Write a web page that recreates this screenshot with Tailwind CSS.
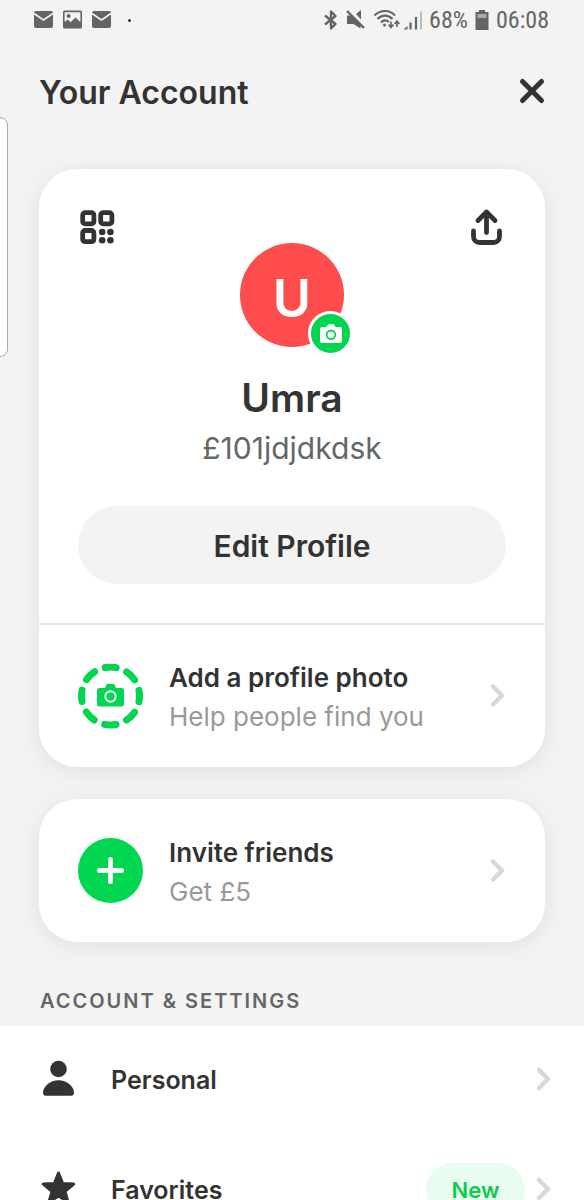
<!DOCTYPE html>
<html lang="en">
<head>
<meta charset="utf-8">
<meta name="viewport" content="width=device-width, initial-scale=1">
<title>Your Account</title>
<script src="https://cdn.jsdelivr.net/npm/@tailwindcss/browser@4"></script>
</head>
<body class="relative flex h-screen flex-col overflow-y-auto bg-[#f3f3f3] font-['Inter',sans-serif] text-[#333] [scrollbar-width:none]">

  <!-- System status bar -->
  <div class="flex h-10 shrink-0 items-center justify-between pl-8 pr-[35px] text-[#646464]">
    <div class="flex items-center gap-[7px]">
      <svg class="h-[22px] w-[22px]" viewBox="0 0 22 22" fill="currentColor"><rect x="2" y="2" width="19" height="17" rx="2"/><path d="M2 4.500 11.500 11 21 4.500" fill="none" stroke="#f3f3f3" stroke-width="1.600"/></svg>
      <svg class="h-[22px] w-[22px]" viewBox="0 0 22 22"><path fill="currentColor" fill-rule="evenodd" d="M3.500 1.500h16a1.500 1.500 0 0 1 1.500 1.500v15a1.500 1.500 0 0 1-1.500 1.500h-16A1.500 1.500 0 0 1 2 18V3a1.500 1.500 0 0 1 1.500-1.500ZM3.600 3.200v9.900l3.200-2.600 2.800 2.700 4.800-4.600 5 4.500V3.200Z"/><circle cx="7.600" cy="7" r="2" fill="currentColor"/></svg>
      <svg class="h-[22px] w-[22px]" viewBox="0 0 22 22" fill="currentColor"><rect x="2" y="2" width="19" height="17" rx="2"/><path d="M2 4.500 11.500 11 21 4.500" fill="none" stroke="#f3f3f3" stroke-width="1.600"/></svg>
      <span class="ml-[9px] size-[3px] rounded-full bg-[#333]"></span>
    </div>
    <div class="flex items-center gap-[7px] font-['Roboto_Condensed','Liberation_Sans_Narrow',Roboto,sans-serif] text-[24px]">
      <svg class="h-[22px] w-4" viewBox="0 0 16 22" fill="none" stroke="currentColor" stroke-width="2.400" stroke-linejoin="round"><path d="m3 6.500 10.500 8.500L9 19.500v-17L13.500 7 3 15.500"/></svg>
      <svg class="h-[22px] w-5" viewBox="0 0 20 22" fill="currentColor"><path d="M2 6.500h4.500l9 9v4L8.500 15H2ZM11 5l5-4v9.500Z"/><path d="m2 2 17 17" stroke="currentColor" stroke-width="2.400"/></svg>
      <svg class="h-[22px] w-[50px]" viewBox="0 0 50 22" fill="none" stroke="currentColor" stroke-width="2.200"><path d="M2.500 6.500c6-6 15-6 20.500 0M5.500 10c4.500-4.500 10.500-4.500 15 0M9 13.500c2.500-2.500 5.500-2.500 8-.5"/><circle cx="12.500" cy="16" r="1.500" fill="currentColor" stroke="none"/><path d="M19 12.500v6M16.600 15.500l2.400 3 2.400-3M25 18v-6M22.600 15l2.400-3 2.400 3" stroke-width="1.600"/><path d="M31.500 20.500 35.500 17v3.500Z" fill="currentColor" stroke="none"/><path d="M38.500 13.500v7M44 8v12.500"/><path d="M49 2.500v18" stroke="#bdbdbd" stroke-width="2"/></svg>
      <span>68%</span>
      <svg class="h-[22px] w-[14px]" viewBox="0 0 14 22"><path fill="currentColor" d="M4 1h6v2h3.500v18H.5V3H4Z"/><path fill="#aaa" d="M2.500 5h9v4h-9z"/></svg>
      <span>06:08</span>
    </div>
  </div>

  <!-- Edge panel handle -->
  <div class="absolute -left-2 top-[117px] h-60 w-4 rounded-lg border border-[#aaa] bg-white"></div>

  <header class="flex h-[105px] shrink-0 items-center justify-between px-[39px]">
    <h1 class="pt-px text-[32px] font-semibold">Your Account</h1>
    <button type="button" aria-label="Close" class="-mr-px pb-1">
      <svg class="block size-7" viewBox="0 0 28 28" fill="none" stroke="#333" stroke-width="5" stroke-linecap="round"><path d="m4.500 4.500 19 19M23.500 4.500l-19 19"/></svg>
    </button>
  </header>

  <main class="flex shrink-0 flex-col pt-6">
    <section class="mx-[39px] rounded-[38px] bg-white shadow-[0_4px_24px_rgba(0,0,0,0.08)]">
      <div class="flex flex-col items-center px-[39px] pb-[39px] pt-[38px]">
        <div class="flex w-full items-start justify-between">
          <button type="button" aria-label="Show QR code">
            <svg class="size-10" viewBox="0 0 40 40" fill="none" stroke="#333" stroke-width="4.800"><rect x="4.700" y="5.700" width="11.200" height="11.200" rx="2.500"/><rect x="22.700" y="5.700" width="11.200" height="11.200" rx="2.500"/><rect x="4.700" y="23.500" width="11.200" height="11.200" rx="2.500"/><g fill="#333" stroke="none"><circle cx="24.200" cy="25" r="3.300"/><circle cx="32.400" cy="25" r="3.300"/><circle cx="24.200" cy="33.200" r="3.300"/><circle cx="32.400" cy="33.200" r="3.300"/></g></svg>
          </button>
          <div class="relative mt-9 flex size-[104px] items-center justify-center rounded-full bg-[#ff4c4c] pt-2 text-[52px] font-semibold text-white">
            U
            <span class="absolute -bottom-[9px] -right-[9px] flex size-[45px] items-center justify-center rounded-full border-3 border-white bg-[#00d64f]">
              <svg class="h-6 w-6" viewBox="0 0 24 24"><path fill="#fff" d="M3 5h4.500L9 2.300h6L16.500 5H21a2 2 0 0 1 2 2v12a2 2 0 0 1-2 2H3a2 2 0 0 1-2-2V7a2 2 0 0 1 2-2Z"/><circle cx="12" cy="12.800" r="4.300" fill="none" stroke="#00d64f" stroke-width="1.800"/></svg>
            </span>
          </div>
          <button type="button" aria-label="Share profile">
            <svg class="size-10" viewBox="0 0 40 40" fill="none" stroke="#333" stroke-width="4.800" stroke-linecap="round" stroke-linejoin="round"><path d="M20.500 25.500V5M12 13.500 20.500 5l8.500 8.500M7.500 24v5.500a6 6 0 0 0 6 6h14a6 6 0 0 0 6-6V24"/></svg>
          </button>
        </div>
        <h2 class="mt-[27px] text-[39px]/[48px] font-semibold">Umra</h2>
        <p class="mt-2 text-[30px]/[36px] text-[#666]">£101jdjdkdsk</p>
        <button type="button" class="mt-10 h-[78px] w-full rounded-full bg-[#f3f3f3] pt-0.5 text-[30px] font-semibold">Edit Profile</button>
      </div>
      <a href="#photo" class="flex h-[144px] items-center border-t-2 border-[#e5e5e5] px-[39px]">
        <svg class="size-[65px]" viewBox="0 0 65 65"><circle cx="32.500" cy="32" r="29" fill="none" stroke="#00d64f" stroke-width="7" stroke-linecap="round" stroke-dasharray="11.400 11.376" stroke-dashoffset="5.700" transform="rotate(-90 32.500 32)"/><path fill="#00d64f" d="M21.500 24h5.500l1.700-4h7.600l1.700 4h5.500A2.500 2.500 0 0 1 46 26.500V40a2.500 2.500 0 0 1-2.500 2.500h-22A2.500 2.500 0 0 1 19 40V26.500a2.500 2.500 0 0 1 2.500-2.500Z"/><circle cx="32.500" cy="32.500" r="5.200" fill="none" stroke="#fff" stroke-width="2"/></svg>
        <span class="ml-[26px] flex-1 pt-0.5">
          <span class="block text-[26px]/[39px] font-semibold">Add a profile photo</span>
          <span class="block text-[26px]/[39px] text-[#999]">Help people find you</span>
        </span>
        <svg class="h-7 w-5" viewBox="0 0 20 28" fill="none" stroke="#d8d8d8" stroke-width="4.500" stroke-linecap="round" stroke-linejoin="round"><path d="m7 4.500 9 9-9 9"/></svg>
      </a>
    </section>

    <a href="#invite" class="mx-[39px] mt-8 flex h-[143px] items-center rounded-[38px] bg-white px-[39px] shadow-[0_4px_24px_rgba(0,0,0,0.08)]">
      <svg class="size-[65px]" viewBox="0 0 65 65"><circle cx="32.500" cy="32.500" r="32.500" fill="#00d64f"/><path d="M21.500 32.500h22M32.500 21.500v22" stroke="#fff" stroke-width="5" stroke-linecap="round"/></svg>
      <span class="ml-[26px] flex-1 pt-0.5">
        <span class="block text-[26px]/[39px] font-semibold">Invite friends</span>
        <span class="block text-[26px]/[39px] text-[#999]">Get £5</span>
      </span>
      <svg class="h-7 w-5" viewBox="0 0 20 28" fill="none" stroke="#d8d8d8" stroke-width="4.500" stroke-linecap="round" stroke-linejoin="round"><path d="m7 4.500 9 9-9 9"/></svg>
    </a>

    <h2 class="ml-10 mt-[47px] text-[20px]/[24px] font-semibold tracking-[2px] text-[#666]">ACCOUNT &amp; SETTINGS</h2>

    <nav class="mt-[13px] bg-white">
      <a href="#personal" class="flex h-[110px] items-center pb-0.5 pl-[39px] pr-8">
        <svg class="size-10" viewBox="0 0 40 40" fill="#333"><circle cx="19.500" cy="9" r="8.300"/><path d="M19.500 20.300c8 0 15.500 6 15.500 12.500a3 3 0 0 1-3 3H7a3 3 0 0 1-3-3c0-6.500 7.500-12.500 15.500-12.500Z"/></svg>
        <span class="ml-8 flex-1 pt-0.5 text-[25px] font-semibold">Personal</span>
        <svg class="h-7 w-5" viewBox="0 0 20 28" fill="none" stroke="#d8d8d8" stroke-width="4.500" stroke-linecap="round" stroke-linejoin="round"><path d="m7 4 9 9-9 9"/></svg>
      </a>
      <a href="#favorites" class="flex h-[110px] items-center pb-0.5 pl-[39px] pr-8">
        <svg class="size-10" viewBox="0 0 40 40" fill="#333" stroke="#333" stroke-width="3" stroke-linejoin="round"><path d="m19.500 3 4.200 10.600 11 .4-8.700 7.400 3 10.600-9.500-6-9.500 6 3-10.600L4.300 14l11-.4Z"/></svg>
        <span class="ml-8 flex-1 pt-0.5 text-[25px] font-semibold">Favorites</span>
        <span class="mr-[7px] flex h-[54px] w-[99px] items-center justify-center rounded-full bg-[#e8fcef] text-[22px] font-semibold text-[#0bcb52]">New</span>
        <svg class="h-7 w-5" viewBox="0 0 20 28" fill="none" stroke="#d8d8d8" stroke-width="4.500" stroke-linecap="round" stroke-linejoin="round"><path d="m7 4 9 9-9 9"/></svg>
      </a>
    </nav>
  </main>
</body>
</html>
